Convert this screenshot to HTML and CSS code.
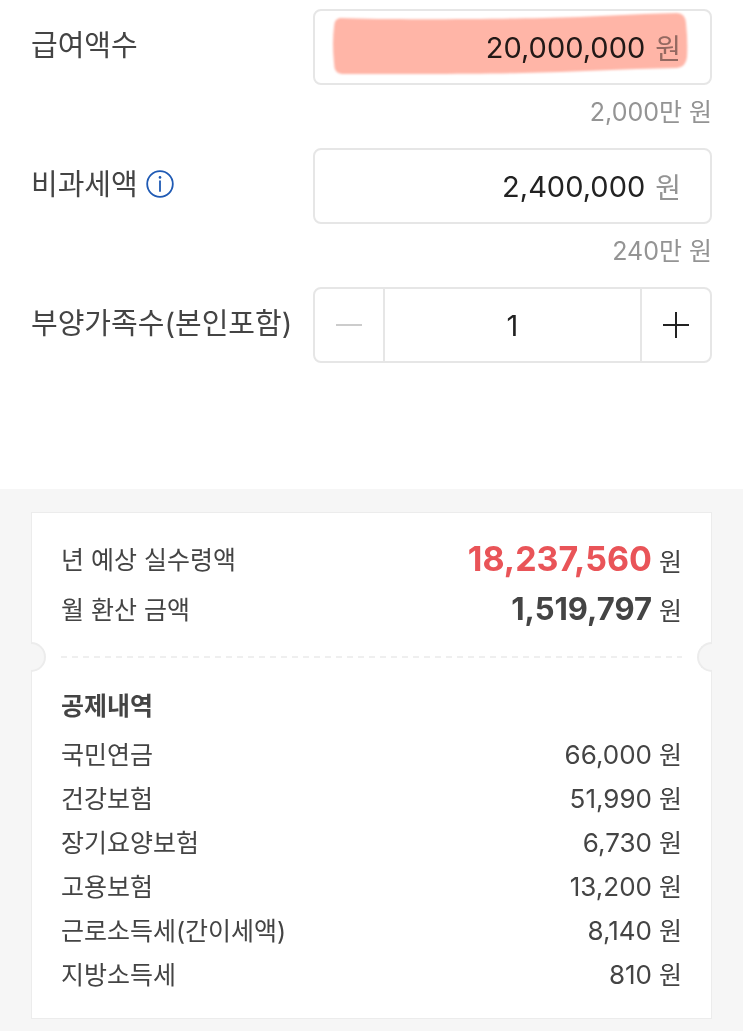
FILE: index.html
```html
<!DOCTYPE html>
<html lang="ko">
<head>
  <meta charset="UTF-8">
  <meta name="viewport" content="width=device-width, initial-scale=1">
  <title>연봉 실수령액 계산기</title>
  <link rel="stylesheet" href="styles.css">
</head>
<body>
  <form class="salary-form">
    <div class="field">
      <label class="field-label" for="salary">급여액수</label>
      <div class="field-control">
        <div class="money-box">
          <input type="text" id="salary" inputmode="numeric" value="20,000,000">
          <span class="unit">원</span>
          <svg class="marker" viewBox="0 0 354 62" preserveAspectRatio="none" aria-hidden="true">
            <path d="M7 5 C60 7 150 6 210 5 C260 4 300 1 344 0 Q352 0 353 10 Q355 30 354 44 Q353 54 344 55 C290 56 240 59 190 60 C130 61 60 61 9 61 Q1 61 1 50 Q-1 30 1 14 Q1 6 7 5 Z"/>
          </svg>
        </div>
        <p class="hint">2,000만 원</p>
      </div>
    </div>

    <div class="field">
      <div class="field-label">
        <label for="taxfree">비과세액</label>
        <button type="button" class="info" aria-label="비과세액 안내">
          <svg viewBox="0 0 28 28" aria-hidden="true">
            <circle cx="14" cy="14" r="12.8" fill="none" stroke="#1f5ab4" stroke-width="1.8"/>
            <circle cx="14" cy="7.4" r="1.3" fill="#1f5ab4"/>
            <path d="M14 11.2V21" stroke="#1f5ab4" stroke-width="1.8" stroke-linecap="round"/>
          </svg>
        </button>
      </div>
      <div class="field-control">
        <div class="money-box">
          <input type="text" id="taxfree" inputmode="numeric" value="2,400,000">
          <span class="unit">원</span>
        </div>
        <p class="hint">240만 원</p>
      </div>
    </div>

    <div class="field">
      <label class="field-label" for="family">부양가족수(본인포함)</label>
      <div class="field-control">
        <div class="stepper">
          <button type="button" class="step" aria-label="감소" disabled>
            <svg viewBox="0 0 26 26" aria-hidden="true"><path d="M0 13H26"/></svg>
          </button>
          <input type="text" id="family" inputmode="numeric" value="1">
          <button type="button" class="step" aria-label="증가">
            <svg viewBox="0 0 26 26" aria-hidden="true"><path d="M0 13H26M13 0V26"/></svg>
          </button>
        </div>
      </div>
    </div>
  </form>

  <section class="result">
    <div class="ticket">
      <dl class="summary">
        <div class="summary-row">
          <dt>년 예상 실수령액</dt>
          <dd><strong class="yearly">18,237,560</strong> 원</dd>
        </div>
        <div class="summary-row">
          <dt>월 환산 금액</dt>
          <dd><strong class="monthly">1,519,797</strong> 원</dd>
        </div>
      </dl>

      <div class="tear"></div>

      <h2>공제내역</h2>
      <table class="deductions">
        <tr><th scope="row">국민연금</th><td><span class="amount">66,000</span> 원</td></tr>
        <tr><th scope="row">건강보험</th><td><span class="amount">51,990</span> 원</td></tr>
        <tr><th scope="row">장기요양보험</th><td><span class="amount">6,730</span> 원</td></tr>
        <tr><th scope="row">고용보험</th><td><span class="amount">13,200</span> 원</td></tr>
        <tr><th scope="row">근로소득세(간이세액)</th><td><span class="amount">8,140</span> 원</td></tr>
        <tr><th scope="row">지방소득세</th><td><span class="amount">810</span> 원</td></tr>
      </table>
    </div>
  </section>
</body>
</html>
```
FILE: styles.css
```css
*, *::before, *::after { box-sizing: border-box; }
body { margin: 0; background: #fff; color: #444; font-family: Inter, "Noto Sans CJK KR", sans-serif; font-size: 25px; font-weight: 400; }
input, button { font: inherit; color: inherit; background: none; border: 0; border-radius: 0; padding: 0; margin: 0; }
input { min-width: 0; outline: 0; }
button { cursor: pointer; }

/* form */
.salary-form { padding: 9px 31px 126px; }
.field { display: grid; grid-template-columns: 282px minmax(0, 1fr); }
.field-label { display: flex; align-items: center; gap: 8px; height: 68px; font-size: 29px; white-space: nowrap; }
.money-box { position: relative; display: flex; align-items: center; gap: 10px; height: 76px; padding: 0 29px; border: 2px solid #e6e6e6; border-radius: 8px; }
.money-box input { flex: 1; height: 100%; text-align: right; font-size: 29px; color: #222; }
.unit { font-size: 28px; color: #949494; }
.hint { margin: 0; height: 63px; line-height: 54px; text-align: right; color: #949494; }
.info { display: flex; padding-top: 3px; }
.info svg { width: 28px; height: 28px; }

/* highlighter stroke over the salary amount */
.marker { position: absolute; left: 18px; top: 2px; width: calc(100% - 41px); height: 62px; overflow: visible; mix-blend-mode: multiply; filter: blur(1px); pointer-events: none; }
.marker path { fill: #ffb5a7; }

.stepper { display: grid; grid-template-columns: 68px minmax(0, 1fr) 68px; height: 76px; border: 2px solid #e6e6e6; border-radius: 8px; }
.stepper input { text-align: center; font-size: 29px; color: #222; border: solid #e6e6e6; border-width: 0 2px; }
.step { display: flex; align-items: center; justify-content: center; }
.step svg { width: 26px; height: 26px; stroke: #222; stroke-width: 2; }
.step:disabled svg { stroke: #ccc; }

/* result */
.result { background: #f6f6f6; padding: 23px 31px 12px; }
.ticket { background: #fff; border: 1px solid #ececec; padding: 22px 29px 21px; }
.summary { margin: 0; }
.summary-row { display: flex; justify-content: space-between; align-items: center; height: 50px; line-height: 50px; }
.summary-row dd { margin: 0; }
.summary-row strong { font-weight: 700; }
.yearly { font-size: 34px; color: #e95458; }
.monthly { font-size: 31px; }

.tear { position: relative; height: 2px; margin: 21px 0 22px; background: repeating-linear-gradient(90deg, #efefef 0 6px, transparent 6px 11px); }
.tear::before, .tear::after { content: ""; position: absolute; top: -14px; width: 15px; height: 30px; background: #f6f6f6; border: 2px solid #ececec; }
.tear::before { left: -30px; border-left: 0; border-radius: 0 15px 15px 0; }
.tear::after { right: -30px; border-right: 0; border-radius: 15px 0 0 15px; }

.ticket h2 { margin: 0; height: 53px; line-height: 53px; font-size: 25px; font-weight: 700; }
.deductions { width: 100%; border-collapse: collapse; }
.deductions th, .deductions td { height: 44px; padding: 0; line-height: 44px; font-weight: 400; }
.deductions th { text-align: left; }
.deductions td { text-align: right; }
.amount { font-size: 26px; }
```
